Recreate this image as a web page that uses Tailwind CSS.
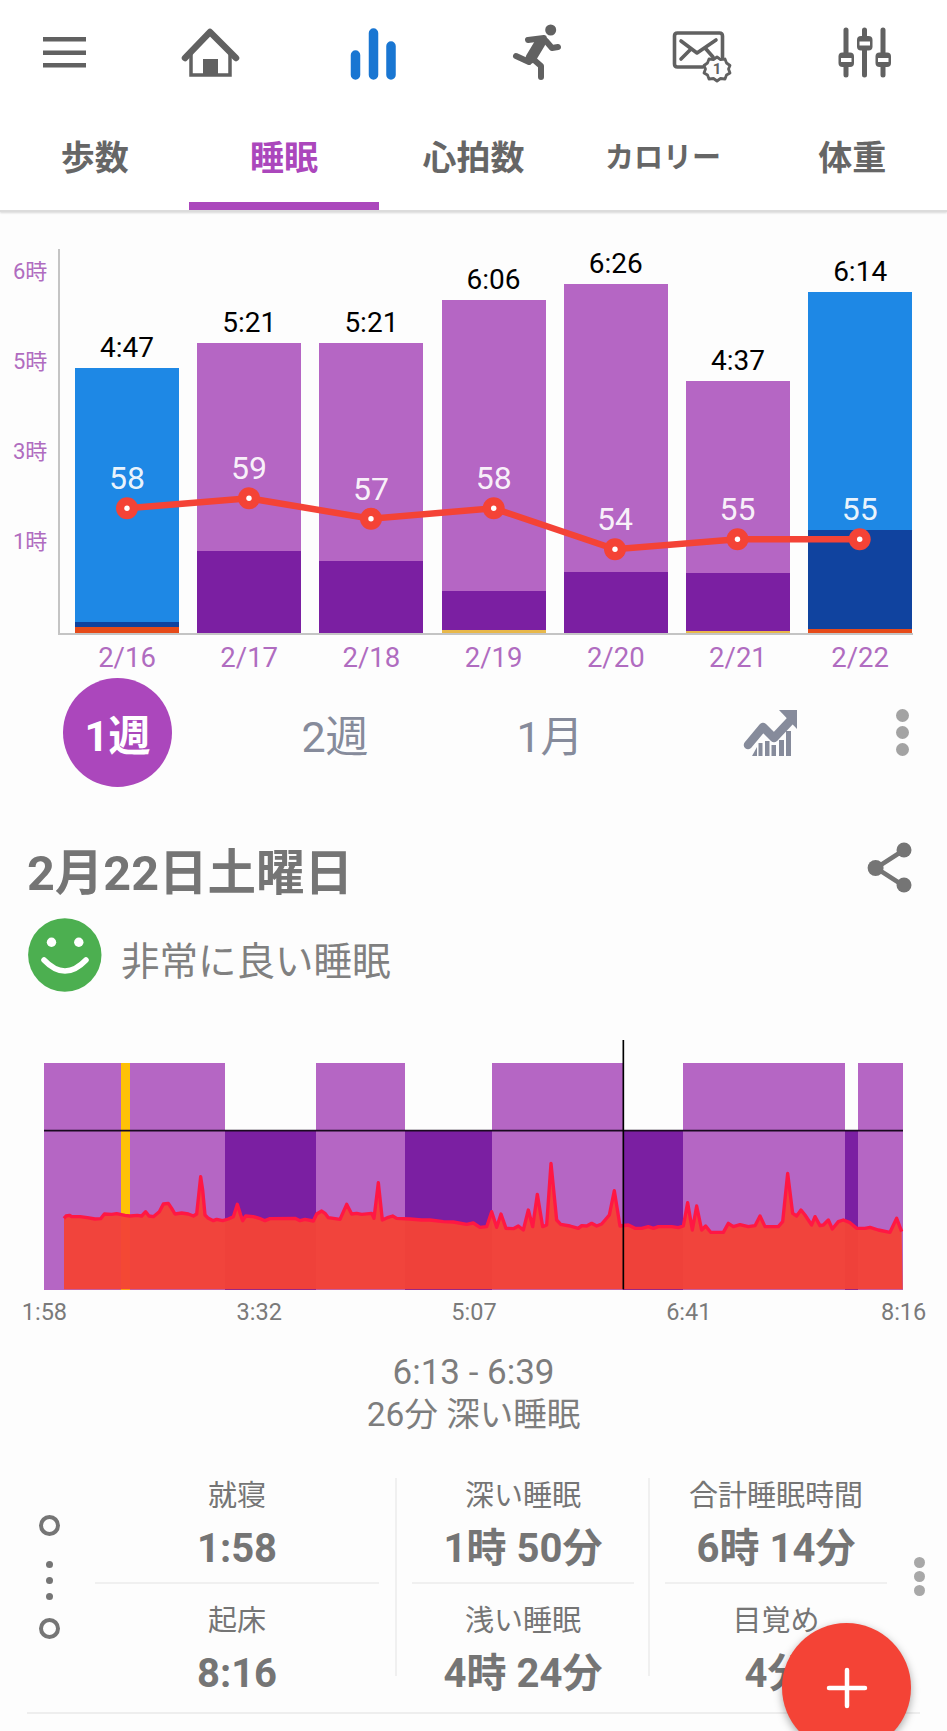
<!DOCTYPE html>
<html lang="ja">
<head>
<meta charset="utf-8">
<script src="https://cdn.jsdelivr.net/npm/@tailwindcss/browser@4"></script>
<title>睡眠</title>
</head>
<body class="bg-[#fdfdfd] font-[Roboto,'Noto_Sans_CJK_JP',sans-serif]">
<div class="relative w-[947px] h-[1731px] overflow-hidden">

  <!-- header -->
  <header class="h-[212px] bg-white border-b-2 border-[#dcdcdc] shadow-[0_1px_2px_rgba(0,0,0,0.15)]">
    <div class="flex h-[105px] pt-[16px] pl-[20px]">
      <svg class="w-[90px] h-[75px] shrink-0" viewBox="0 0 90 75" fill="#616161"><rect x="23" y="21" width="43" height="4.500"/><rect x="23" y="34.500" width="43" height="4.500"/><rect x="23" y="47" width="43" height="4.500"/></svg>
      <svg class="w-[90px] h-[75px] shrink-0 ml-[60px]" viewBox="0 0 90 75"><path d="M15 42 40 16 66 42" fill="none" stroke="#616161" stroke-width="6.500" stroke-linecap="round" stroke-linejoin="round"/><path d="M21 38V59H60V38" fill="none" stroke="#616161" stroke-width="3.500"/><rect x="33" y="43" width="15" height="16" fill="#616161"/></svg>
      <svg class="w-[90px] h-[75px] shrink-0 ml-[70px]" viewBox="0 0 90 75" stroke="#1976d2" stroke-width="9.500" stroke-linecap="round"><path d="M25.500 39V59M43.500 17V59M61 30V59"/></svg>
      <svg class="w-[90px] h-[75px] shrink-0 ml-[80px]" viewBox="0 0 90 75" fill="none" stroke="#616161" stroke-linecap="round" stroke-linejoin="round"><circle cx="50.700" cy="14" r="5.500" fill="#616161" stroke="none"/><path d="M40 27 31 42" stroke-width="11"/><path d="M28 24 44 22M46 25 52 32 58 31M16 40 29 46M33 43 41 50V61" stroke-width="6"/></svg>
      <svg class="w-[90px] h-[75px] shrink-0 ml-[60px]" viewBox="150 0 90 75" fill="none" stroke="#616161" stroke-linecap="round" stroke-linejoin="round"><path d="M222.500 41V20Q222.500 17 219.500 17H177.500Q174.500 17 174.500 20V48Q174.500 51 177.500 51H203" stroke-width="3.600"/><path d="M181 25 197 37 216 24M181 43 191 33M213 41 206 33" stroke-width="3.600"/><polygon points="217,41 220.500,43.500 225,43 226.500,47 230,49.500 228.500,53 230,57 226.500,59 225,63 220.500,62.500 217,65 213.500,62.500 209,63 207.500,59 204,57 205.500,53 204,49.500 207.500,47 209,43 213.500,43.500" fill="#fdfdfd" stroke-width="2.800"/><text x="217" y="58" text-anchor="middle" font-size="15" font-weight="700" fill="#616161" stroke="none">1</text></svg>
      <svg class="w-[90px] h-[75px] shrink-0 ml-[85px]" viewBox="0 0 90 75"><g stroke="#616161" stroke-width="5" stroke-linecap="round"><path d="M21 14V59M39.500 14V59M58 14V59"/></g><g fill="#616161"><rect x="13.500" y="36.500" width="15.500" height="14.500" rx="4"/><rect x="32" y="20" width="15.500" height="14.500" rx="4"/><rect x="50.500" y="36.500" width="15.500" height="14.500" rx="4"/></g><g fill="#fff"><rect x="16" y="42" width="10.500" height="4"/><rect x="34.500" y="25.500" width="10.500" height="4"/><rect x="53" y="42" width="10.500" height="4"/></g></svg>
    </div>
    <nav class="grid grid-cols-5 h-[107px] text-[#666] font-bold text-center">
      <div class="h-[105px] pt-[28px] text-[34px] leading-[50px]">歩数</div>
      <div class="h-[105px] pt-[28px] text-[34px] leading-[50px] text-[#ab47bc] border-b-[8px] border-[#ab47bc]">睡眠</div>
      <div class="h-[105px] pt-[28px] text-[34px] leading-[50px]">心拍数</div>
      <div class="h-[105px] pt-[28px] text-[29px] leading-[50px]">カロリー</div>
      <div class="h-[105px] pt-[28px] text-[34px] leading-[50px]">体重</div>
    </nav>
  </header>

  <!-- weekly chart -->
  <section class="relative flex h-[424px] pl-[13px] pt-[37px]">
    <div class="w-[45px] h-[324px] pt-[8px] flex flex-col gap-[60px] text-[22px] leading-[30px] text-[#b06cc0]">
      <div>6時</div><div>5時</div><div>3時</div><div>1時</div>
    </div>
    <div class="h-[386px] w-[855px] border-l-2 border-b-2 border-[#c4c4c4] flex items-end gap-[18.2px] pl-[15px]">
      <div class="w-[104px] shrink-0 flex flex-col text-center text-black text-[28px] leading-[30px]"><div class="mb-[5px]">4:47</div><div class="h-[254px] bg-[#1e88e5]"></div><div class="h-[5px] bg-[#10439f]"></div><div class="h-[6px] bg-[#e64a19]"></div></div>
      <div class="w-[104px] shrink-0 flex flex-col text-center text-black text-[28px] leading-[30px]"><div class="mb-[5px]">5:21</div><div class="h-[208px] bg-[#b566c4]"></div><div class="h-[82px] bg-[#7b1fa2]"></div></div>
      <div class="w-[104px] shrink-0 flex flex-col text-center text-black text-[28px] leading-[30px]"><div class="mb-[5px]">5:21</div><div class="h-[218px] bg-[#b566c4]"></div><div class="h-[72px] bg-[#7b1fa2]"></div></div>
      <div class="w-[104px] shrink-0 flex flex-col text-center text-black text-[28px] leading-[30px]"><div class="mb-[5px]">6:06</div><div class="h-[291px] bg-[#b566c4]"></div><div class="h-[39px] bg-[#7b1fa2]"></div><div class="h-[3px] bg-[#e8b84a]"></div></div>
      <div class="w-[104px] shrink-0 flex flex-col text-center text-black text-[28px] leading-[30px]"><div class="mb-[5px]">6:26</div><div class="h-[288px] bg-[#b566c4]"></div><div class="h-[61px] bg-[#7b1fa2]"></div></div>
      <div class="w-[104px] shrink-0 flex flex-col text-center text-black text-[28px] leading-[30px]"><div class="mb-[5px]">4:37</div><div class="h-[192px] bg-[#b566c4]"></div><div class="h-[58px] bg-[#7b1fa2]"></div><div class="h-[2px] bg-[#e8b84a]"></div></div>
      <div class="w-[104px] shrink-0 flex flex-col text-center text-black text-[28px] leading-[30px]"><div class="mb-[5px]">6:14</div><div class="h-[238px] bg-[#1e88e5]"></div><div class="h-[99px] bg-[#10439f]"></div><div class="h-[4px] bg-[#e64a19]"></div></div>
    </div>
    <svg class="absolute left-0 top-0 w-[947px] h-[424px] pointer-events-none" viewBox="0 212 947 424">
      <polyline points="127,508.300 249,498.300 371,518.700 493.700,508.300 615,549.300 737.500,539.300 859.700,539.300" fill="none" stroke="#f44336" stroke-width="6.500"/>
      <g fill="#f44336"><circle cx="127" cy="508.300" r="11"/><circle cx="249" cy="498.300" r="11"/><circle cx="371" cy="518.700" r="11"/><circle cx="493.700" cy="508.300" r="11"/><circle cx="615" cy="549.300" r="11"/><circle cx="737.500" cy="539.300" r="11"/><circle cx="859.700" cy="539.300" r="11"/></g>
      <g fill="#fff"><circle cx="127" cy="508.300" r="2.700"/><circle cx="249" cy="498.300" r="2.700"/><circle cx="371" cy="518.700" r="2.700"/><circle cx="493.700" cy="508.300" r="2.700"/><circle cx="615" cy="549.300" r="2.700"/><circle cx="737.500" cy="539.300" r="2.700"/><circle cx="859.700" cy="539.300" r="2.700"/></g>
      <g fill="#fff" fill-opacity="0.93" font-size="32" text-anchor="middle"><text x="127" y="489">58</text><text x="249" y="479">59</text><text x="371" y="499.500">57</text><text x="493.700" y="489">58</text><text x="615" y="530">54</text><text x="737.500" y="520">55</text><text x="859.700" y="520">55</text></g>
    </svg>
  </section>

  <div class="flex gap-[18.2px] pl-[75px] h-[42px] text-[27.500px] leading-[44px] text-[#b06cc0] text-center">
    <div class="w-[104px] shrink-0">2/16</div><div class="w-[104px] shrink-0">2/17</div><div class="w-[104px] shrink-0">2/18</div><div class="w-[104px] shrink-0">2/19</div><div class="w-[104px] shrink-0">2/20</div><div class="w-[104px] shrink-0">2/21</div><div class="w-[104px] shrink-0">2/22</div>
  </div>

  <!-- period selector -->
  <div class="flex items-center h-[109px] pl-[63px] text-[43px] text-[#868b9b]">
    <div class="w-[109px] h-[109px] rounded-full bg-[#ab47bc] text-white font-bold text-[42px] pt-[8px] flex items-center justify-center shrink-0">1週</div>
    <div class="w-[120px] ml-[103px] mt-[9px] text-center shrink-0">2週</div>
    <div class="w-[120px] ml-[95px] mt-[9px] text-center shrink-0">1月</div>
    <svg class="w-[70px] h-[65px] ml-[128px] shrink-0 mt-[-1px]" viewBox="0 0 70 65" fill="#868b9b"><path d="M10 45 25 27 36 38 52 21" fill="none" stroke="#868b9b" stroke-width="8.500" stroke-linejoin="round" stroke-linecap="round"/><polygon points="41,10 59,10 59,29"/><polygon points="14,56 19,47 19,56"/><rect x="20.500" y="43" width="4" height="13"/><rect x="27" y="41" width="4.500" height="15"/><rect x="33.500" y="45" width="4.500" height="11"/><rect x="41" y="40" width="5" height="16"/><rect x="48" y="31" width="5" height="25"/></svg>
    <div class="ml-[88px] flex flex-col gap-[4px] shrink-0"><div class="w-[13px] h-[13px] rounded-full bg-[#a3a3a3]"></div><div class="w-[13px] h-[13px] rounded-full bg-[#a3a3a3]"></div><div class="w-[13px] h-[13px] rounded-full bg-[#a3a3a3]"></div></div>
  </div>

  <!-- day heading -->
  <div class="flex items-center justify-between h-[60px] mt-[57px] pl-[27px] pr-[33px] text-[#757575]">
    <h1 class="text-[48.500px] leading-[60px] font-bold">2月22日土曜日</h1>
    <svg class="w-[50px] h-[54px] shrink-0 mt-[-13px]" viewBox="864 840 50 54" fill="#757575"><path d="M904 849 876 867 904 885" fill="none" stroke="#757575" stroke-width="4.500"/><circle cx="904" cy="849" r="7.500"/><circle cx="875.600" cy="867" r="8"/><circle cx="904" cy="884" r="7.500"/></svg>
  </div>
  <div class="flex items-center h-[74px] mt-[14px] pl-[28px] text-[#808080]">
    <svg class="w-[74px] h-[74px] shrink-0" viewBox="7.500 8 74 74"><circle cx="44.300" cy="45" r="36.700" fill="#4caf50"/><circle cx="31" cy="32.300" r="4.700" fill="#fff"/><circle cx="58.300" cy="32.300" r="4.700" fill="#fff"/><path d="M23.500 50Q44.500 72 65.500 50" fill="none" stroke="#fff" stroke-width="5.500" stroke-linecap="round"/></svg>
    <div class="ml-[19px] text-[38.500px] leading-[50px] mt-[13px]">非常に良い睡眠</div>
  </div>

  <!-- sleep stages -->
  <section class="relative h-[300px] mt-[38px] pt-[33px]">
    <div class="flex items-end h-[227px] pl-[44px]">
      <div class="h-full w-[76.700px] bg-[#b566c4]"></div>
      <div class="h-full w-[9.600px] bg-[#ffc107]"></div>
      <div class="h-full w-[95px] bg-[#b566c4]"></div>
      <div class="h-[159px] w-[91px] bg-[#7b1fa2]"></div>
      <div class="h-full w-[89px] bg-[#b566c4]"></div>
      <div class="h-[159px] w-[87px] bg-[#7b1fa2]"></div>
      <div class="h-full w-[131px] bg-[#b566c4]"></div>
      <div class="h-[159px] w-[59.700px] bg-[#7b1fa2]"></div>
      <div class="h-full w-[161.600px] bg-[#b566c4]"></div>
      <div class="h-[159px] w-[13.400px] bg-[#7b1fa2]"></div>
      <div class="h-full w-[45.300px] bg-[#b566c4]"></div>
    </div>
    <div class="grid grid-cols-5 w-[1074px] ml-[-63px] mt-[7px] text-[23.500px] leading-[30px] text-[#7a7a7a] text-center">
      <div>1:58</div><div>3:32</div><div>5:07</div><div>6:41</div><div>8:16</div>
    </div>
    <svg class="absolute left-0 top-0 w-[947px] h-[300px] pointer-events-none" viewBox="0 0 2841 900">
      <polygon fill="#f44336" fill-opacity="0.96" points="192,778 192,565 198,558 208,556 216,560 240,560 262,563 285,567 302,566 313,552 335,553 350,551 375,556 390,558 412,556 425,558 437,545 447,558 460,560 478,545 490,522 505,520 515,535 525,552 545,549 565,552 580,558 590,552 602,440 608,480 615,555 625,565 640,572 650,568 668,572 685,567 700,560 712,523 722,555 728,572 737,558 760,560 778,565 795,572 810,566 885,565 900,572 915,568 940,573 950,552 965,543 975,550 985,563 1020,568 1040,523 1055,552 1070,550 1085,553 1115,550 1122,565 1135,458 1147,570 1165,562 1178,558 1190,565 1230,567 1265,570 1290,570 1330,575 1360,576 1400,583 1420,579 1440,592 1460,590 1475,545 1490,592 1503,552 1518,595 1540,596 1555,588 1570,600 1585,540 1598,590 1612,493 1628,590 1640,585 1653,400 1670,570 1682,583 1710,588 1735,595 1745,587 1760,588 1775,580 1790,588 1805,582 1828,555 1843,482 1860,588 1885,585 1905,595 1925,595 1945,590 1960,595 1975,590 2015,590 2035,593 2050,588 2063,518 2077,600 2090,528 2105,600 2117,588 2132,607 2170,607 2185,580 2200,590 2220,584 2245,590 2265,587 2280,558 2295,590 2335,590 2348,575 2363,430 2378,550 2390,558 2403,540 2415,555 2435,585 2445,560 2460,587 2470,585 2485,570 2497,597 2515,575 2530,570 2550,578 2570,595 2595,595 2610,592 2635,600 2670,607 2690,565 2705,605 2708,778"/>
      <polyline fill="none" stroke="#ff1744" stroke-width="10" stroke-linejoin="round" points="192,565 198,558 208,556 216,560 240,560 262,563 285,567 302,566 313,552 335,553 350,551 375,556 390,558 412,556 425,558 437,545 447,558 460,560 478,545 490,522 505,520 515,535 525,552 545,549 565,552 580,558 590,552 602,440 608,480 615,555 625,565 640,572 650,568 668,572 685,567 700,560 712,523 722,555 728,572 737,558 760,560 778,565 795,572 810,566 885,565 900,572 915,568 940,573 950,552 965,543 975,550 985,563 1020,568 1040,523 1055,552 1070,550 1085,553 1115,550 1122,565 1135,458 1147,570 1165,562 1178,558 1190,565 1230,567 1265,570 1290,570 1330,575 1360,576 1400,583 1420,579 1440,592 1460,590 1475,545 1490,592 1503,552 1518,595 1540,596 1555,588 1570,600 1585,540 1598,590 1612,493 1628,590 1640,585 1653,400 1670,570 1682,583 1710,588 1735,595 1745,587 1760,588 1775,580 1790,588 1805,582 1828,555 1843,482 1860,588 1885,585 1905,595 1925,595 1945,590 1960,595 1975,590 2015,590 2035,593 2050,588 2063,518 2077,600 2090,528 2105,600 2117,588 2132,607 2170,607 2185,580 2200,590 2220,584 2245,590 2265,587 2280,558 2295,590 2335,590 2348,575 2363,430 2378,550 2390,558 2403,540 2415,555 2435,585 2445,560 2460,587 2470,585 2485,570 2497,597 2515,575 2530,570 2550,578 2570,595 2595,595 2610,592 2635,600 2670,607 2690,565 2705,605"/>
      <path d="M132 302H2709" stroke="#1a0a20" stroke-width="5"/>
      <path d="M1870 30V778" stroke="#000" stroke-width="5"/>
    </svg>
  </section>

  <!-- selected range -->
  <div class="mt-[22px] text-center leading-[42px] text-[#7d7d7d]">
    <div class="text-[35px]">6:13 - 6:39</div>
    <div class="text-[33.500px]">26分 深い睡眠</div>
  </div>

  <!-- summary table -->
  <div class="flex h-[236px] mt-[42px] mx-[27px] border-b-2 border-[#eeeeee] text-[#757575] text-center">
    <div class="w-[68px] shrink-0 pl-[12px] pt-[37px] flex flex-col items-start">
      <div class="w-[21px] h-[21px] rounded-full border-[4px] border-[#757575]"></div>
      <div class="flex flex-col gap-[9px] ml-[7px] mt-[25px]"><div class="w-[7px] h-[7px] rounded-full bg-[#757575]"></div><div class="w-[7px] h-[7px] rounded-full bg-[#757575]"></div><div class="w-[7px] h-[7px] rounded-full bg-[#757575]"></div></div>
      <div class="w-[21px] h-[21px] rounded-full border-[4px] border-[#757575] mt-[18px]"></div>
    </div>
    <div class="w-[284px] shrink-0">
      <div class="h-[106px] border-b-2 border-[#f0f0f0]"><div class="text-[29px] leading-[36px]">就寝</div><div class="mt-[12px] text-[40px] leading-[46px] font-bold">1:58</div></div>
      <div class="pt-[19px]"><div class="text-[29px] leading-[36px]">起床</div><div class="mt-[12px] text-[40px] leading-[46px] font-bold">8:16</div></div>
    </div>
    <div class="w-[2px] h-[198px] ml-[16px] mr-[15px] bg-[#f0f0f0] shrink-0"></div>
    <div class="w-[222px] shrink-0">
      <div class="h-[106px] border-b-2 border-[#f0f0f0]"><div class="text-[29px] leading-[36px]">深い睡眠</div><div class="mt-[12px] text-[40px] leading-[46px] font-bold whitespace-nowrap">1時 50分</div></div>
      <div class="pt-[19px]"><div class="text-[29px] leading-[36px]">浅い睡眠</div><div class="mt-[12px] text-[40px] leading-[46px] font-bold whitespace-nowrap">4時 24分</div></div>
    </div>
    <div class="w-[2px] h-[198px] ml-[14px] mr-[15px] bg-[#f0f0f0] shrink-0"></div>
    <div class="w-[222px] shrink-0">
      <div class="h-[106px] border-b-2 border-[#f0f0f0]"><div class="text-[29px] leading-[36px] whitespace-nowrap">合計睡眠時間</div><div class="mt-[12px] text-[40px] leading-[46px] font-bold whitespace-nowrap">6時 14分</div></div>
      <div class="pt-[19px]"><div class="text-[29px] leading-[36px]">目覚め</div><div class="mt-[12px] text-[40px] leading-[46px] font-bold">4分</div></div>
    </div>
    <div class="ml-[27px] mt-[79px] flex flex-col gap-[3px] shrink-0"><div class="w-[11px] h-[11px] rounded-full bg-[#a8a8a8]"></div><div class="w-[11px] h-[11px] rounded-full bg-[#a8a8a8]"></div><div class="w-[11px] h-[11px] rounded-full bg-[#a8a8a8]"></div></div>
  </div>

  <!-- floating action button -->
  <button class="absolute left-[782px] top-[1623px] w-[129px] h-[129px] rounded-full bg-[#f44336] shadow-[0_3px_8px_rgba(0,0,0,0.35)] flex items-center justify-center">
    <svg class="w-[42px] h-[42px]" viewBox="0 0 42 42" stroke="#fff" stroke-width="4.500" stroke-linecap="round"><path d="M21 3V39M3 21H39"/></svg>
  </button>
</div>
</body>
</html>
